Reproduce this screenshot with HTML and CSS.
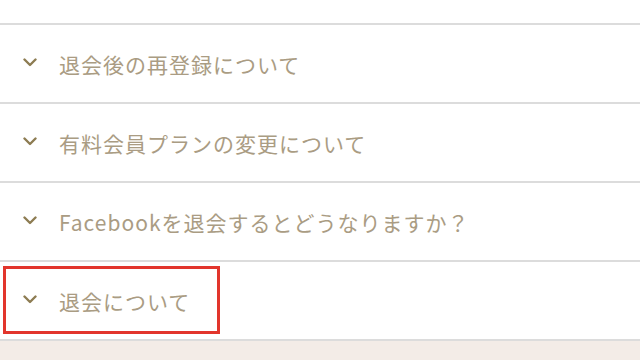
FILE: index.html
```html
<!DOCTYPE html>
<html lang="ja">
<head>
<meta charset="utf-8">
<link rel="stylesheet" href="styles.css">
</head>
<body>
<div class="faq">
  <div class="row partial"><span class="label">アカウントを削除すると、過去の投稿はどうなりますか？</span></div>
  <div class="row">
    <svg class="chev" viewBox="0 0 14 9" width="14" height="9"><path d="M1.5 1.5 L7 7 L12.5 1.5" fill="none" stroke="currentColor" stroke-width="2.4" stroke-linecap="round" stroke-linejoin="round"/></svg>
    <span class="label">退会後の再登録について</span>
  </div>
  <div class="row">
    <svg class="chev" viewBox="0 0 14 9" width="14" height="9"><path d="M1.5 1.5 L7 7 L12.5 1.5" fill="none" stroke="currentColor" stroke-width="2.4" stroke-linecap="round" stroke-linejoin="round"/></svg>
    <span class="label">有料会員プランの変更について</span>
  </div>
  <div class="row">
    <svg class="chev" viewBox="0 0 14 9" width="14" height="9"><path d="M1.5 1.5 L7 7 L12.5 1.5" fill="none" stroke="currentColor" stroke-width="2.4" stroke-linecap="round" stroke-linejoin="round"/></svg>
    <span class="label">Facebookを退会するとどうなりますか？</span>
  </div>
  <div class="row marked">
    <svg class="chev" viewBox="0 0 14 9" width="14" height="9"><path d="M1.5 1.5 L7 7 L12.5 1.5" fill="none" stroke="currentColor" stroke-width="2.4" stroke-linecap="round" stroke-linejoin="round"/></svg>
    <span class="label">退会について</span>
    <div class="highlight"></div>
  </div>
</div>
<div class="footer"></div>
</body>
</html>
```
FILE: styles.css
```css
html, body {
  margin: 0;
  padding: 0;
  background: #ffffff;
  width: 640px;
  height: 360px;
  overflow: hidden;
  font-family: "Noto Sans CJK JP", "Noto Sans", sans-serif;
}
.faq {
  display: flex;
  flex-direction: column;
}
.row {
  position: relative;
  display: flex;
  align-items: center;
  height: 77px;
  padding-left: 23px;
  gap: 22px;
  border-bottom: 2px solid #dcdcdc;
  color: #aa9c83;
}
.row.partial {
  height: 23px;
  align-items: flex-start;
  overflow: hidden;
  padding-left: 20px;
}
.row.partial .label {
  margin-top: -27px;
  color: #e6e1d9;
}
.chev {
  flex: none;
  color: #8d7c52;
  margin-top: -2px;
}
.label {
  font-size: 21px;
  letter-spacing: 1px;
  line-height: 28px;
  white-space: nowrap;
}
.highlight {
  position: absolute;
  left: 3px;
  top: 4px;
  width: 211px;
  height: 62px;
  border: 3px solid #e2352c;
}
.footer {
  height: 19px;
  background: #f3ece7;
}
```
